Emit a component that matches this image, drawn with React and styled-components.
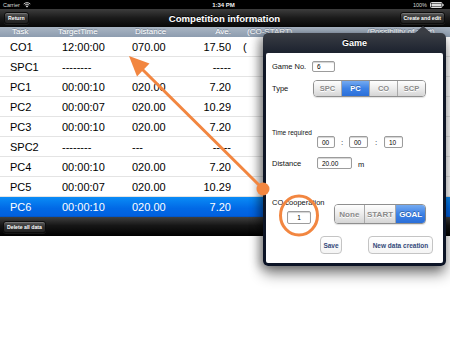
import React from 'react';
import styled, { createGlobalStyle } from 'styled-components';

const GlobalStyle = createGlobalStyle`
  html, body { margin: 0; padding: 0; background: #fff; }
  body { font-family: "Liberation Sans", Arial, sans-serif; }
  * { box-sizing: border-box; }
`;

const Screen = styled.div`
  position: relative;
  width: 450px;
  height: 338px;
  overflow: hidden;
  background: #fff;
`;

const StatusBar = styled.div`
  height: 9px;
  background: #000;
  color: #d8d8d8;
  font-size: 5.5px;
  display: grid;
  grid-template-columns: 1fr auto 1fr;
  align-items: center;
  padding: 0 6px 0 3px;
`;

const StatusSide = styled.div`
  display: flex;
  align-items: center;
  gap: 3px;
  justify-content: ${p => (p.$end ? 'flex-end' : 'flex-start')};
`;

const Clock = styled.div`
  font-weight: bold;
  font-size: 6px;
  color: #f0f0f0;
`;

const NavBar = styled.div`
  height: 18px;
  background: linear-gradient(#3d3d3d, #1a1a1a 50%, #070707);
  display: grid;
  grid-template-columns: 1fr auto 1fr;
  align-items: center;
  padding: 0 5px 0 4px;
`;

const Title = styled.div`
  color: #fff;
  font-weight: bold;
  font-size: 9.6px;
  text-shadow: 0 -1px 0 rgba(0, 0, 0, 0.7);
`;

const BarButton = styled.div`
  justify-self: ${p => (p.$end ? 'end' : 'start')};
  height: 12px;
  padding: 0 3px;
  display: flex;
  align-items: center;
  font-size: 5.2px;
  font-weight: bold;
  color: #fff;
  border-radius: 3px;
  border: 1px solid #0d0d0d;
  background: linear-gradient(#5a5a5a, #2e2e2e 55%, #222);
  box-shadow: inset 0 1px 0 rgba(255, 255, 255, 0.18), 0 1px 0 rgba(255, 255, 255, 0.08);
`;

const HeaderRow = styled.div`
  height: 10px;
  display: grid;
  grid-template-columns: 58px 72px 70px 31px 136px 1fr;
  align-items: center;
  background: linear-gradient(#a9b5c3, #8d9caf);
  color: #fff;
  font-size: 8px;
  line-height: 10px;
  text-shadow: 0 -1px 0 rgba(70, 85, 105, 0.5);
  white-space: nowrap;
`;

const Row = styled.div`
  height: 20px;
  display: grid;
  grid-template-columns: 58px 72px 70px 31px 136px 1fr;
  align-items: center;
  font-size: 11px;
  white-space: nowrap;
  color: ${p => (p.$selected ? '#fff' : '#000')};
  background: ${p => (p.$selected ? 'linear-gradient(#0a8cf6, #0169e6 60%, #0160df)' : '#fff')};
  border-bottom: 1px solid ${p => (p.$selected ? '#0157cc' : '#e4e4e4')};
`;

const Cell = styled.div`
  padding-left: ${p => p.$pl || 0}px;
  text-align: ${p => (p.$right ? 'right' : 'left')};
  overflow: hidden;
`;

const Toolbar = styled.div`
  height: 19px;
  display: flex;
  align-items: center;
  padding-left: 3px;
  background: linear-gradient(#3f3f3f, #161616 45%, #000);
`;

const Popover = styled.div`
  position: absolute;
  left: 263px;
  top: 33px;
  width: 183px;
  height: 233px;
  padding: 0 3px 3px;
  border-radius: 5px;
  background: linear-gradient(#3a3d44, #101726 12%, #0c1426);
  box-shadow: 0 8px 14px rgba(0, 0, 0, 0.45), -4px 2px 10px rgba(0, 0, 0, 0.3);
  display: flex;
  flex-direction: column;
`;

const Arrow = styled.div`
  position: absolute;
  top: -7px;
  left: 152px;
  width: 0;
  height: 0;
  border-left: 8px solid transparent;
  border-right: 8px solid transparent;
  border-bottom: 7px solid #3a3d44;
`;

const PopHeader = styled.div`
  height: 20px;
  display: flex;
  align-items: center;
  justify-content: center;
  color: #fff;
  font-weight: bold;
  font-size: 9px;
  text-shadow: 0 -1px 0 #000;
`;

const PopBody = styled.div`
  flex: 1;
  background: #fff;
  border-radius: 2px;
  padding: 0 6px;
  display: flex;
  flex-direction: column;
`;

const FormRow = styled.div`
  display: flex;
  align-items: ${p => p.$align || 'center'};
  margin-top: ${p => p.$mt || 0}px;
  height: ${p => p.$h}px;
  padding-left: ${p => p.$pl || 0}px;
`;

const Label = styled.div`
  font-size: ${p => p.$size || 7.5}px;
  color: #111;
  width: ${p => (p.$w ? `${p.$w}px` : 'auto')};
  white-space: nowrap;
`;

const Field = styled.div`
  width: ${p => p.$w}px;
  height: ${p => p.$h || 12}px;
  border: 1px solid #9c9c9c;
  border-radius: 2px;
  box-shadow: inset 0 1px 1px rgba(0, 0, 0, 0.18);
  background: #fff;
  font-size: 6.5px;
  color: #000;
  display: flex;
  align-items: center;
  justify-content: ${p => (p.$center ? 'center' : 'flex-start')};
  padding-left: ${p => (p.$center ? 0 : 4)}px;
`;

const Colon = styled.div`
  width: ${p => p.$w}px;
  text-align: center;
  font-size: 8px;
  color: #222;
`;

const SegGroup = styled.div`
  display: flex;
  width: ${p => p.$w}px;
  height: ${p => p.$h}px;
  border: 1px solid #8f8f8f;
  border-radius: 4px;
  overflow: hidden;
  box-shadow: 0 1px 1px rgba(0, 0, 0, 0.12);
`;

const Seg = styled.div`
  flex: ${p => p.$flex || 1};
  display: flex;
  align-items: center;
  justify-content: center;
  font-size: ${p => p.$size || 7.5}px;
  font-weight: bold;
  color: ${p => (p.$on ? '#fff' : '#8a8a8a')};
  text-shadow: ${p => (p.$on ? '0 -1px 0 rgba(0,0,0,0.3)' : '0 1px 0 #fff')};
  background: ${p => (p.$on
    ? 'linear-gradient(#75aaf0, #3d82e6 50%, #2b6fd8)'
    : 'linear-gradient(#fefefe, #ececec 50%, #d5d5d5)')};
  border-left: 1px solid #a9a9a9;
  &:first-child { border-left: none; }
`;

const CoBlock = styled.div`
  display: flex;
  flex-direction: column;
  width: 62px;
`;

const PlainButton = styled.div`
  width: ${p => p.$w}px;
  height: 18px;
  margin-left: ${p => p.$ml || 0}px;
  border: 1px solid #c4c4c4;
  border-radius: 4px;
  background: linear-gradient(#fff, #f4f4f4);
  display: flex;
  align-items: center;
  justify-content: center;
  font-size: 6.5px;
  font-weight: bold;
  color: #34497a;
  white-space: nowrap;
`;

const Overlay = styled.svg`
  position: absolute;
  left: 0;
  top: 0;
  pointer-events: none;
`;

const rows = [
  ['CO1', '12:00:00', '070.00', '17.50', '('],
  ['SPC1', '--------', '', '-----', ''],
  ['PC1', '00:00:10', '020.00', '7.20', ''],
  ['PC2', '00:00:07', '020.00', '10.29', ''],
  ['PC3', '00:00:10', '020.00', '7.20', ''],
  ['SPC2', '--------', '---', '-----', ''],
  ['PC4', '00:00:10', '020.00', '7.20', ''],
  ['PC5', '00:00:07', '020.00', '10.29', ''],
  ['PC6', '00:00:10', '020.00', '7.20', ''],
];

const Wifi = () => (
  <svg width="8" height="6" viewBox="0 0 16 12">
    <path d="M8 11 L5.5 8.3 A3.6 3.6 0 0 1 10.5 8.3 Z" fill="#ddd" />
    <path d="M3.6 6.3 A6.3 6.3 0 0 1 12.4 6.3" stroke="#ddd" strokeWidth="1.8" fill="none" />
    <path d="M1.4 4 A9.4 9.4 0 0 1 14.6 4" stroke="#ddd" strokeWidth="1.8" fill="none" />
  </svg>
);

const Battery = () => (
  <svg width="14" height="6" viewBox="0 0 14 6">
    <rect x="0.5" y="0.5" width="11.5" height="5" rx="1" fill="none" stroke="#ddd" />
    <rect x="1.5" y="1.5" width="9.5" height="3" fill="#ddd" />
    <rect x="12.3" y="2" width="1.3" height="2" fill="#ddd" />
  </svg>
);

export default function App() {
  return (
    <Screen>
      <GlobalStyle />
      <StatusBar>
        <StatusSide>
          <span>Carrier</span>
          <Wifi />
        </StatusSide>
        <Clock>1:34 PM</Clock>
        <StatusSide $end>
          <span>100%</span>
          <Battery />
        </StatusSide>
      </StatusBar>
      <NavBar>
        <BarButton>Return</BarButton>
        <Title>Competition information</Title>
        <BarButton $end>Create and edit</BarButton>
      </NavBar>
      <HeaderRow>
        <Cell $pl={12}>Task</Cell>
        <Cell>TargetTime</Cell>
        <Cell $pl={5}>Distance</Cell>
        <Cell $right>Ave.</Cell>
        <Cell $pl={16}>(CO-START)</Cell>
        <Cell>(Possibility of start)</Cell>
      </HeaderRow>
      {rows.map((r, i) => (
        <Row key={r[0]} $selected={i === rows.length - 1}>
          <Cell $pl={10}>{r[0]}</Cell>
          <Cell $pl={4}>{r[1]}</Cell>
          <Cell $pl={2}>{r[2]}</Cell>
          <Cell $right>{r[3]}</Cell>
          <Cell $pl={12}>{r[4]}</Cell>
          <Cell />
        </Row>
      ))}
      <Toolbar>
        <BarButton>Delete all data</BarButton>
      </Toolbar>

      <Popover>
        <Arrow />
        <PopHeader>Game</PopHeader>
        <PopBody>
          <FormRow $mt={8} $h={11}>
            <Label $w={40}>Game No.</Label>
            <Field $w={23} $h={11}>6</Field>
          </FormRow>
          <FormRow $mt={8} $h={17}>
            <Label $w={41}>Type</Label>
            <SegGroup $w={113} $h={17}>
              <Seg>SPC</Seg>
              <Seg $on>PC</Seg>
              <Seg>CO</Seg>
              <Seg>SCP</Seg>
            </SegGroup>
          </FormRow>
          <FormRow $mt={31} $h={8}>
            <Label $size={6.5}>Time required</Label>
          </FormRow>
          <FormRow $h={12} $pl={45}>
            <Field $w={18}>00</Field>
            <Colon $w={14}>:</Colon>
            <Field $w={19}>00</Field>
            <Colon $w={16}>:</Colon>
            <Field $w={19}>10</Field>
          </FormRow>
          <FormRow $mt={9} $h={12}>
            <Label $w={45}>Distance</Label>
            <Field $w={35}>20.00</Field>
            <Label $size={7.5} style={{ marginLeft: 6, paddingTop: 3 }}>m</Label>
          </FormRow>
          <FormRow $mt={30} $h={25} $align="flex-end">
            <CoBlock>
              <Label>CO cooperation</Label>
              <Field $w={24} $h={13} $center style={{ marginLeft: 15, marginTop: 4 }}>1</Field>
            </CoBlock>
            <SegGroup $w={92} $h={20}>
              <Seg $size={8}>None</Seg>
              <Seg $size={8} $flex={1.07}>START</Seg>
              <Seg $size={8} $on>GOAL</Seg>
            </SegGroup>
          </FormRow>
          <FormRow $mt={12} $h={18} $pl={48}>
            <PlainButton $w={22}>Save</PlainButton>
            <PlainButton $w={65} $ml={26}>New data creation</PlainButton>
          </FormRow>
        </PopBody>
      </Popover>

      <Overlay width="450" height="338" viewBox="0 0 450 338">
        <line x1="263" y1="189" x2="141" y2="68" stroke="#f28640" strokeWidth="3" />
        <polygon points="129,56 149.5,63.5 137,76.5" fill="#f28640" />
        <circle cx="263" cy="189" r="6.5" fill="#f28640" />
        <ellipse cx="299" cy="215.5" rx="18.5" ry="19.5" fill="none" stroke="#f28640" strokeWidth="3" />
      </Overlay>
    </Screen>
  );
}
